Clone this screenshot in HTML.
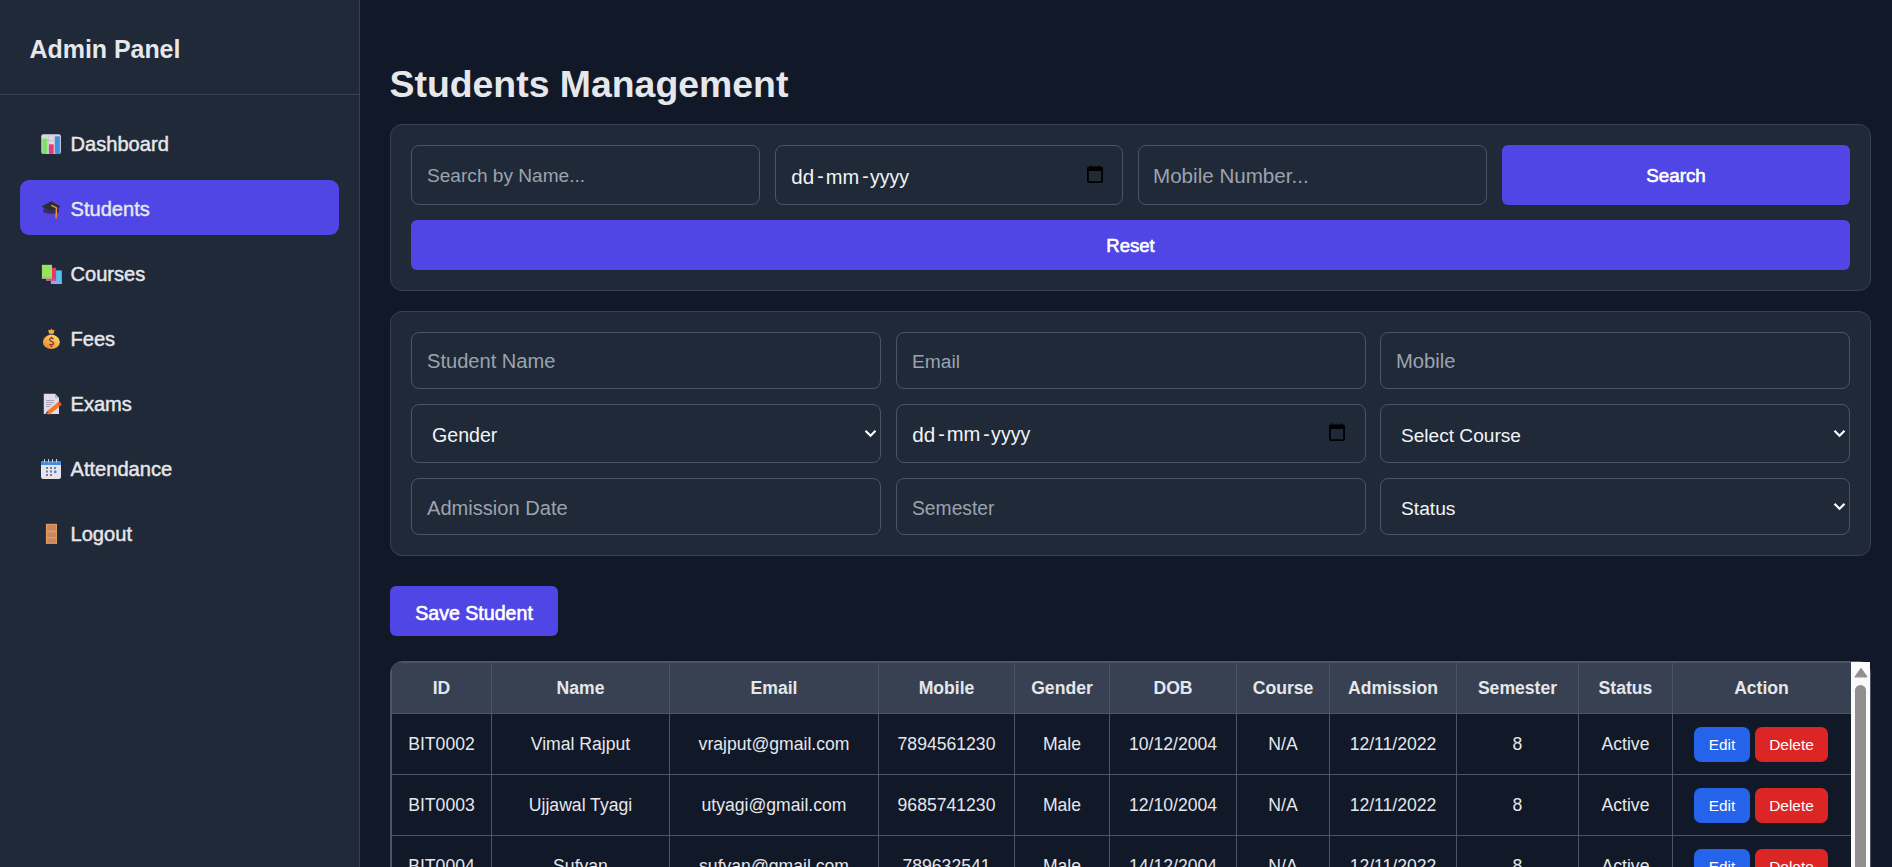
<!DOCTYPE html><html><head><meta charset="utf-8"><style>
*{box-sizing:border-box;margin:0;padding:0}
html,body{width:1892px;height:867px;overflow:hidden;background:#111827;font-family:"Liberation Sans",sans-serif;color:#e5e7eb}
#side{position:absolute;left:0;top:0;width:360px;height:867px;background:#1f2937;border-right:1px solid #374151}
#side .hd{position:absolute;left:0;top:0;width:359px;height:95px;border-bottom:1px solid #374151}
#side .hd span{position:absolute;left:29.5px;top:31px;font-size:25px;letter-spacing:-0.05px;font-weight:bold;color:#e5e7eb;white-space:nowrap;line-height:36px}
.nav{position:absolute;left:20px;width:319px;height:55px;border-radius:9px}
.nav.act{background:#4f46e5}
.nav .ic{position:absolute;left:21px;top:18px;width:22px;height:22px}
.nav .tx{position:absolute;left:50.5px;top:2px;line-height:55px;font-size:20.1px;-webkit-text-stroke:0.45px #e5e7eb;color:#e5e7eb;white-space:nowrap}
h1{position:absolute;left:389.5px;top:61px;font-size:37.4px;font-weight:bold;color:#e5e7eb;white-space:nowrap;line-height:46px}
.card{position:absolute;left:390px;width:1481px;background:#1f2937;border:1px solid #374151;border-radius:12px}
.inp{position:absolute;border:1px solid #4b5563;border-radius:8px;background:#1f2937}
.t{position:absolute;white-space:nowrap;top:0}
.ph{color:#9ca3af}
.vl{color:#f3f4f6}
.btn{position:absolute;background:#4f46e5;border-radius:6px;color:#fff;-webkit-text-stroke:0.6px #fff;text-align:center;white-space:nowrap}
#tbl .hl{position:absolute;left:0;width:1460px;height:1px;background:#4b5563}
#tbl .vl2{position:absolute;top:0;width:1px;height:320px;background:#4b5563}
#tbl .th{position:absolute;top:0;height:52px;line-height:52px;text-align:center;font-weight:bold;font-size:17.6px;color:#e5e7eb;white-space:nowrap}
#tbl .td{position:absolute;height:60px;line-height:60px;text-align:center;font-size:17.6px;color:#e5e7eb;white-space:nowrap}
#tbl .eb{position:absolute;left:1303px;width:56px;height:35px;line-height:35px;background:#2563eb;border-radius:7px;color:#fff;font-size:15.4px;text-align:center}
#tbl .db{position:absolute;left:1364px;width:73px;height:35px;line-height:35px;background:#dc2626;border-radius:7px;color:#fff;font-size:15.4px;text-align:center}
</style></head><body>
<div id="side"><div class="hd"><span>Admin Panel</span></div>
<div class="nav" style="top:115px"><svg class="ic" width="22" height="22" viewBox="0 0 22 22"><rect x="0.3" y="1.2" width="19.6" height="19.7" rx="2" fill="#dcd8e3"/><path d="M0.5 7.5H20M0.5 14H20M7.3 1.5V21M13.4 1.5V21" stroke="#b9b5c2" stroke-width="0.6"/><rect x="1.4" y="5.6" width="4.8" height="15.3" rx="0.8" fill="#7ddf6a"/><rect x="8" y="11.2" width="4.7" height="9.7" rx="0.8" fill="#e83a78"/><rect x="14" y="3.2" width="4.9" height="17.7" rx="0.8" fill="#3b93e6"/></svg><span class="tx">Dashboard</span></div>
<div class="nav act" style="top:180px"><svg class="ic" width="22" height="22" viewBox="0 0 22 22"><path d="M2.3 10.5V14.2Q10 17.5 17.9 14.2V10.5Z" fill="#3a2f5c"/><path d="M10.3 3.2L19.8 8.6L10.3 13.3L0.4 8.6Z" fill="#2e2a3a"/><path d="M10.3 7.4L15.3 9.6V18" fill="none" stroke="#f0a030" stroke-width="1.3"/><path d="M14 17H16.4L16 20.5H14.4Z" fill="#f97316"/></svg><span class="tx">Students</span></div>
<div class="nav" style="top:245px"><svg class="ic" width="22" height="22" viewBox="0 0 22 22"><rect x="9.9" y="7.4" width="10.9" height="13.5" fill="#4cc6f5"/><rect x="9.9" y="19.2" width="10.9" height="1.7" fill="#a8a0e0"/><rect x="5" y="4.8" width="10.1" height="13" fill="#e8386a"/><rect x="5" y="16.4" width="10.1" height="1.5" fill="#c0609a"/><rect x="0.9" y="1.8" width="10.1" height="13.9" fill="#9be05e"/><rect x="0.9" y="14" width="10.1" height="1.7" fill="#b8a8c8"/></svg><span class="tx">Courses</span></div>
<div class="nav" style="top:310px"><svg class="ic" width="22" height="22" viewBox="0 0 22 22"><defs><linearGradient id="gb" x1="0.8" y1="0.1" x2="0.2" y2="0.9"><stop offset="0" stop-color="#fdd85a"/><stop offset="1" stop-color="#ef8a3c"/></linearGradient></defs><ellipse cx="10.35" cy="13.9" rx="8.5" ry="7.1" fill="url(#gb)"/><path d="M7.3 1.6Q8.6 2.4 9.2 2.4Q10.2 0.6 10.4 0.6Q10.8 0.6 11.4 2.4Q12.3 2.4 13.4 1.6Q13.2 4 12.6 5.2H8.1Q7.4 4 7.3 1.6Z" fill="#f9b043"/><rect x="8.1" y="5" width="4.5" height="1.4" fill="#c9813e"/><path d="M12.5 10.9C11.8 9.9 8.6 9.7 8.6 11.7C8.6 13.6 12.6 13 12.6 15.2C12.6 17.2 9.2 17.2 8.3 16.1M10.5 8.7V10.3M10.5 16.6V18.9" fill="none" stroke="#7a3d3c" stroke-width="1.4"/></svg><span class="tx">Fees</span></div>
<div class="nav" style="top:375px"><svg class="ic" width="22" height="22" viewBox="0 0 22 22"><path d="M2.8 0.8H14L18 5V20.9H2.8Z" fill="#e2dcea"/><path d="M14 0.8V5H18Z" fill="#b8b2c2"/><path d="M5 7.5H13M5 9.5H13M5 11.5H11M5 13.5H9" stroke="#9a94a4" stroke-width="0.8"/><path d="M6.8 20.2L17.2 11.8" stroke="#f57a28" stroke-width="4.2"/><path d="M17.2 11.8L19.6 9.8" stroke="#f0503a" stroke-width="4.2"/><path d="M5 21L6.8 19" stroke="#5a3a6a" stroke-width="1.5"/></svg><span class="tx">Exams</span></div>
<div class="nav" style="top:440px"><svg class="ic" width="22" height="22" viewBox="0 0 22 22"><rect x="0" y="2.9" width="20" height="18" rx="2.2" fill="#e6e2ee"/><path d="M0 5Q0 2.9 2.2 2.9H17.8Q20 2.9 20 5V7H0Z" fill="#3d8ee8"/><path d="M3.5 1V4.5M7.5 1V4.5M11.5 1V4.5M15.5 1V4.5" stroke="#d0ccd8" stroke-width="1"/><g fill="#7e7a86"><rect x="5" y="9" width="2" height="2"/><rect x="9" y="9" width="2" height="2"/><rect x="13" y="9" width="2" height="2"/><rect x="5" y="12.5" width="2" height="2"/><rect x="9" y="12.5" width="2" height="2"/><rect x="5" y="16" width="2" height="2"/><rect x="9" y="16" width="2" height="2"/></g><rect x="13" y="12.5" width="2.4" height="2.6" fill="#3d8ee8"/></svg><span class="tx">Attendance</span></div>
<div class="nav" style="top:505px"><svg class="ic" width="22" height="22" viewBox="0 0 22 22"><rect x="4.9" y="0.8" width="11.1" height="20.1" fill="#e09a62"/><rect x="6.2" y="2" width="8.6" height="5.6" fill="#c98660"/><rect x="6.2" y="9.5" width="8.6" height="4.5" fill="#c98660"/><rect x="6.2" y="15.3" width="8.6" height="4.5" fill="#c98660"/><circle cx="14.6" cy="8.6" r="0.9" fill="#f59e0b"/></svg><span class="tx">Logout</span></div>
</div>
<h1>Students Management</h1>
<div class="card" style="top:124px;height:167px"></div>
<div class="inp" style="left:411px;top:145px;width:349px;height:60px"><span class="t ph" style="left:15px;top:1px;line-height:58px;font-size:19.1px">Search by Name...</span></div>
<div class="inp" style="left:775px;top:145px;width:348px;height:60px"><span class="t vl" style="left:15.3px;top:2px;line-height:58px;font-size:20.55px">dd</span><span class="t vl" style="left:41.2px;top:2px;line-height:58px;font-size:19.30px">-</span><span class="t vl" style="left:49.8px;top:2px;line-height:58px;font-size:20.07px">mm</span><span class="t vl" style="left:86.3px;top:2px;line-height:58px;font-size:19.30px">-</span><span class="t vl" style="left:94.1px;top:2px;line-height:58px;font-size:19.49px">yyyy</span><svg style="position:absolute;left:311px;top:19px" width="16" height="18" viewBox="0 0 16 18"><path d="M3.7 0.3v3M12.3 0.3v3" stroke="#000" stroke-width="1.2"/><rect x="0.9" y="2.4" width="14.2" height="14.8" rx="1.2" fill="none" stroke="#000" stroke-width="1.8"/><rect x="0.9" y="2.4" width="14.2" height="3.6" fill="#000"/></svg></div>
<div class="inp" style="left:1138px;top:145px;width:349px;height:60px"><span class="t ph" style="left:14px;top:1px;line-height:58px;font-size:20.6px">Mobile Number...</span></div>
<div class="btn" style="left:1502px;top:145px;width:348px;height:60px;line-height:62px;font-size:18.8px">Search</div>
<div class="btn" style="left:411px;top:220px;width:1439px;height:50px;line-height:52px;font-size:18.5px">Reset</div>
<div class="card" style="top:311px;height:245px"></div>
<div class="inp" style="left:411px;top:332px;width:470px;height:57px"><span class="t ph" style="left:15px;top:0.5px;line-height:55px;font-size:20.1px">Student Name</span></div>
<div class="inp" style="left:896px;top:332px;width:470px;height:57px"><span class="t ph" style="left:15px;top:0.5px;line-height:55px;font-size:19.2px">Email</span></div>
<div class="inp" style="left:1380px;top:332px;width:470px;height:57px"><span class="t ph" style="left:15px;top:0.5px;line-height:55px;font-size:20.2px">Mobile</span></div>
<div class="inp" style="left:411px;top:404px;width:470px;height:59px"><span class="t vl" style="left:20px;top:2px;line-height:57px;font-size:19.6px">Gender</span><svg style="position:absolute;left:452px;top:24px" width="13" height="9" viewBox="0 0 13 9"><path d="M1.5 1.8L6.5 6.8L11.5 1.8" fill="none" stroke="#fff" stroke-width="2.2"/></svg></div>
<div class="inp" style="left:896px;top:404px;width:470px;height:59px"><span class="t vl" style="left:15.3px;top:1px;line-height:57px;font-size:20.66px">dd</span><span class="t vl" style="left:41.2px;top:1px;line-height:57px;font-size:19.40px">-</span><span class="t vl" style="left:49.8px;top:1px;line-height:57px;font-size:20.18px">mm</span><span class="t vl" style="left:86.3px;top:1px;line-height:57px;font-size:19.40px">-</span><span class="t vl" style="left:94.1px;top:1px;line-height:57px;font-size:19.59px">yyyy</span><svg style="position:absolute;left:432px;top:17.5px" width="16" height="18" viewBox="0 0 16 18"><path d="M3.7 0.3v3M12.3 0.3v3" stroke="#000" stroke-width="1.2"/><rect x="0.9" y="2.4" width="14.2" height="14.8" rx="1.2" fill="none" stroke="#000" stroke-width="1.8"/><rect x="0.9" y="2.4" width="14.2" height="3.6" fill="#000"/></svg></div>
<div class="inp" style="left:1380px;top:404px;width:470px;height:59px"><span class="t vl" style="left:20px;top:2px;line-height:57px;font-size:19.1px">Select Course</span><svg style="position:absolute;left:452px;top:24px" width="13" height="9" viewBox="0 0 13 9"><path d="M1.5 1.8L6.5 6.8L11.5 1.8" fill="none" stroke="#fff" stroke-width="2.2"/></svg></div>
<div class="inp" style="left:411px;top:478px;width:470px;height:57px"><span class="t ph" style="left:15px;top:2px;line-height:55px;font-size:20.1px">Admission Date</span></div>
<div class="inp" style="left:896px;top:478px;width:470px;height:57px"><span class="t ph" style="left:15px;top:2px;line-height:55px;font-size:19.3px">Semester</span></div>
<div class="inp" style="left:1380px;top:478px;width:470px;height:57px"><span class="t vl" style="left:20px;top:2px;line-height:55px;font-size:19.2px">Status</span><svg style="position:absolute;left:452px;top:23px" width="13" height="9" viewBox="0 0 13 9"><path d="M1.5 1.8L6.5 6.8L11.5 1.8" fill="none" stroke="#fff" stroke-width="2.2"/></svg></div>
<div class="btn" style="left:390px;top:586px;width:168px;height:50px;line-height:55px;font-size:19.6px">Save Student</div>
<div id="tbl" style="position:absolute;left:390px;top:661px;width:1481px;height:320px;border:1px solid #4b5563;border-radius:12px;overflow:hidden;background:#111827">
<div style="position:absolute;left:0;top:0;width:1460px;height:52px;background:#374151;border-top:1px solid #4b5563;border-left:1px solid #4b5563"></div>
<div style="position:absolute;left:0;top:0;width:1px;height:320px;background:#4b5563"></div>
<div class="hl" style="top:51px"></div>
<div class="hl" style="top:112px"></div>
<div class="hl" style="top:173px"></div>
<div class="vl2" style="left:100px"></div>
<div class="vl2" style="left:278px"></div>
<div class="vl2" style="left:487px"></div>
<div class="vl2" style="left:623px"></div>
<div class="vl2" style="left:718px"></div>
<div class="vl2" style="left:845px"></div>
<div class="vl2" style="left:938px"></div>
<div class="vl2" style="left:1065px"></div>
<div class="vl2" style="left:1187px"></div>
<div class="vl2" style="left:1281px"></div>
<div class="th" style="left:0px;width:101px;top:0px">ID</div>
<div class="th" style="left:100px;width:179px;top:0px">Name</div>
<div class="th" style="left:278px;width:210px;top:0px">Email</div>
<div class="th" style="left:487px;width:137px;top:0px">Mobile</div>
<div class="th" style="left:623px;width:96px;top:0px">Gender</div>
<div class="th" style="left:718px;width:128px;top:0px">DOB</div>
<div class="th" style="left:845px;width:94px;top:0px">Course</div>
<div class="th" style="left:938px;width:128px;top:0px">Admission</div>
<div class="th" style="left:1065px;width:123px;top:0px">Semester</div>
<div class="th" style="left:1187px;width:95px;top:0px">Status</div>
<div class="th" style="left:1281px;width:179px;top:0px">Action</div>
<div class="td" style="left:0px;top:52px;width:101px">BIT0002</div>
<div class="td" style="left:100px;top:52px;width:179px">Vimal Rajput</div>
<div class="td" style="left:278px;top:52px;width:210px">vrajput@gmail.com</div>
<div class="td" style="left:487px;top:52px;width:137px">7894561230</div>
<div class="td" style="left:623px;top:52px;width:96px">Male</div>
<div class="td" style="left:718px;top:52px;width:128px">10/12/2004</div>
<div class="td" style="left:845px;top:52px;width:94px">N/A</div>
<div class="td" style="left:938px;top:52px;width:128px">12/11/2022</div>
<div class="td" style="left:1065px;top:52px;width:123px">8</div>
<div class="td" style="left:1187px;top:52px;width:95px">Active</div>
<div class="eb" style="top:65px">Edit</div><div class="db" style="top:65px">Delete</div>
<div class="td" style="left:0px;top:113px;width:101px">BIT0003</div>
<div class="td" style="left:100px;top:113px;width:179px">Ujjawal Tyagi</div>
<div class="td" style="left:278px;top:113px;width:210px">utyagi@gmail.com</div>
<div class="td" style="left:487px;top:113px;width:137px">9685741230</div>
<div class="td" style="left:623px;top:113px;width:96px">Male</div>
<div class="td" style="left:718px;top:113px;width:128px">12/10/2004</div>
<div class="td" style="left:845px;top:113px;width:94px">N/A</div>
<div class="td" style="left:938px;top:113px;width:128px">12/11/2022</div>
<div class="td" style="left:1065px;top:113px;width:123px">8</div>
<div class="td" style="left:1187px;top:113px;width:95px">Active</div>
<div class="eb" style="top:126px">Edit</div><div class="db" style="top:126px">Delete</div>
<div class="td" style="left:0px;top:174px;width:101px">BIT0004</div>
<div class="td" style="left:100px;top:174px;width:179px">Sufyan</div>
<div class="td" style="left:278px;top:174px;width:210px">sufyan@gmail.com</div>
<div class="td" style="left:487px;top:174px;width:137px">789632541</div>
<div class="td" style="left:623px;top:174px;width:96px">Male</div>
<div class="td" style="left:718px;top:174px;width:128px">14/12/2004</div>
<div class="td" style="left:845px;top:174px;width:94px">N/A</div>
<div class="td" style="left:938px;top:174px;width:128px">12/11/2022</div>
<div class="td" style="left:1065px;top:174px;width:123px">8</div>
<div class="td" style="left:1187px;top:174px;width:95px">Active</div>
<div class="eb" style="top:187px">Edit</div><div class="db" style="top:187px">Delete</div>
</div>
<div style="position:absolute;left:1851px;top:662px;width:19px;height:220px;background:#fafafa"></div>
<svg style="position:absolute;left:1854px;top:667px" width="14" height="11" viewBox="0 0 14 11"><path d="M7 1.5L12.8 9.8H1.2Z" fill="#8f8f8f" stroke="#8f8f8f" stroke-width="1.2" stroke-linejoin="round"/></svg>
<div style="position:absolute;left:1855px;top:685px;width:11px;height:300px;background:#8f8f8f;border-radius:5.5px"></div>
</body></html>
